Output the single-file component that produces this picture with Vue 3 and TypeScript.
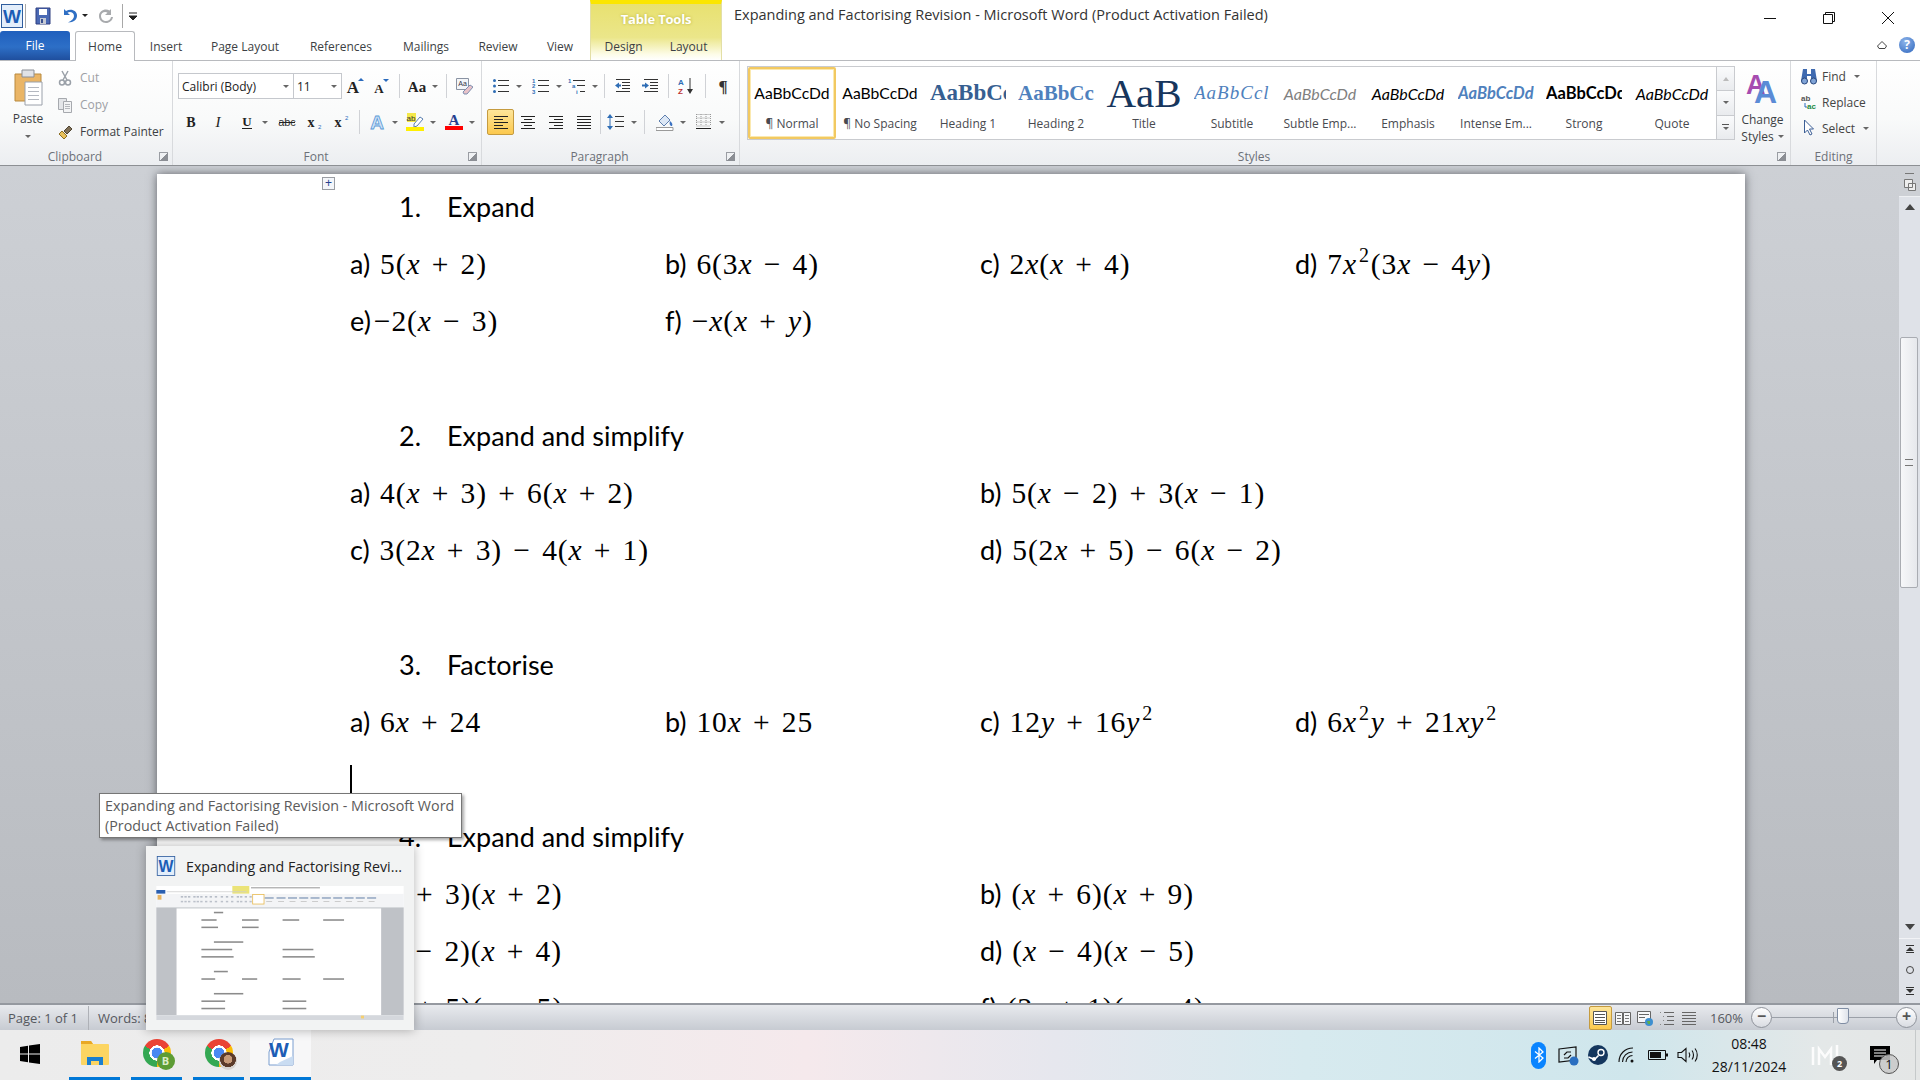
<template>
  <div class="shell">
    <header class="head">
      <div class="head-left">
        <div class="qat">
          <svg class="qat-word" width="22" height="24" viewBox="0 0 22 24" v-html="icons.wordSmall"></svg>
          <i class="qat-sep"></i>
          <svg width="18" height="18" viewBox="0 0 18 18" v-html="icons.save"></svg>
          <svg class="qat-undo" width="18" height="18" viewBox="0 0 18 18" v-html="icons.undo"></svg>
          <span class="caret caret--dark"></span>
          <svg class="qat-redo" width="18" height="18" viewBox="0 0 18 18" v-html="icons.redo"></svg>
          <i class="qat-sep qat-sep--two"></i>
          <svg width="10" height="12" viewBox="0 0 10 12"><path d="M1 3h8M1 6h8l-4 4z" stroke="#222" fill="#222" stroke-width="1" /></svg>
        </div>
        <div class="tabs">
          <div class="tab tab--file">File</div>
          <div
            v-for="t in tabs"
            :key="t.name"
            class="tab"
            :class="{ 'tab--on': t.on }"
            :style="{ width: t.w + 'px' }"
          >
            {{ t.name }}
          </div>
        </div>
      </div>
      <div class="context">
        <div class="context-title">Table Tools</div>
        <div class="context-tabs"><span>Design</span><span>Layout</span></div>
      </div>
      <div class="head-right">
        <div class="title-row">
          <div class="title">Expanding and Factorising Revision  -  Microsoft Word (Product Activation Failed)</div>
          <div class="win-btns">
            <svg width="14" height="14" viewBox="0 0 14 14"><path d="M1 7.500h12" stroke="#111" /></svg>
            <svg width="14" height="14" viewBox="0 0 14 14" fill="none" stroke="#111"><path d="M1.500 3.500h9v9h-9zM3.500 3.500v-2h9v9h-2" /></svg>
            <svg width="14" height="14" viewBox="0 0 14 14"><path d="M1 1l12 12M13 1L1 13" stroke="#111" /></svg>
          </div>
        </div>
        <div class="help-row">
          <svg width="12" height="10" viewBox="0 0 12 10" fill="none" stroke="#444"><path d="M1.500 6L6 1.500 10.500 6 9 8.500H3z" /></svg>
          <div class="help">?</div>
        </div>
      </div>
    </header>

    <section class="ribbon">
      <div class="group group--clip">
        <div class="group-body clip">
          <div class="paste">
            <svg width="32" height="38" viewBox="0 0 32 38" v-html="icons.paste"></svg>
            <span class="paste-label">Paste</span>
            <span class="caret"></span>
          </div>
          <div class="clip-list">
            <div class="clip-row clip-row--off"><svg width="16" height="16" viewBox="0 0 16 16" v-html="icons.cut"></svg>Cut</div>
            <div class="clip-row clip-row--off"><svg width="16" height="16" viewBox="0 0 16 16" v-html="icons.copy"></svg>Copy</div>
            <div class="clip-row"><svg width="16" height="16" viewBox="0 0 16 16" v-html="icons.painter"></svg>Format Painter</div>
          </div>
        </div>
        <div class="group-label">Clipboard<span class="launcher"></span></div>
      </div>

      <div class="group group--font">
        <div class="group-body tool-rows">
          <div class="tool-row">
            <div class="combo combo--font">Calibri (Body)<span class="caret"></span></div>
            <div class="combo combo--size">11<span class="caret"></span></div>
            <template v-for="(b, i) in fontTop" :key="i">
              <i v-if="b.sep" class="tool-sep" :style="{ width: b.w + 'px' }"></i>
              <div v-else class="btn" :style="{ width: b.w + 'px' }">
                <svg width="18" height="18" viewBox="0 0 18 18" v-html="icons[b.i!]"></svg>
                <span v-if="b.c" class="caret"></span>
              </div>
            </template>
          </div>
          <div class="tool-row">
            <template v-for="(b, i) in fontBottom" :key="i">
              <i v-if="b.sep" class="tool-sep" :style="{ width: b.w + 'px' }"></i>
              <div v-else class="btn" :style="{ width: b.w + 'px' }">
                <svg width="18" height="18" viewBox="0 0 18 18" v-html="icons[b.i!]"></svg>
                <span v-if="b.c" class="caret"></span>
              </div>
            </template>
          </div>
        </div>
        <div class="group-label">Font<span class="launcher"></span></div>
      </div>

      <div class="group group--para">
        <div class="group-body tool-rows">
          <div class="tool-row">
            <template v-for="(b, i) in paraTop" :key="i">
              <i v-if="b.sep" class="tool-sep" :style="{ width: b.w + 'px' }"></i>
              <div v-else class="btn" :style="{ width: b.w + 'px' }">
                <svg width="18" height="18" viewBox="0 0 18 18" v-html="icons[b.i!]"></svg>
                <span v-if="b.c" class="caret"></span>
              </div>
            </template>
          </div>
          <div class="tool-row">
            <template v-for="(b, i) in paraBottom" :key="i">
              <i v-if="b.sep" class="tool-sep" :style="{ width: b.w + 'px' }"></i>
              <div v-else class="btn" :class="{ 'btn--on': b.on }" :style="{ width: b.w + 'px' }">
                <svg width="18" height="18" viewBox="0 0 18 18" v-html="icons[b.i!]"></svg>
                <span v-if="b.c" class="caret"></span>
              </div>
            </template>
          </div>
        </div>
        <div class="group-label">Paragraph<span class="launcher"></span></div>
      </div>

      <div class="group group--styles">
        <div class="group-body styles">
          <div class="gallery">
            <div v-for="s in styleItems" :key="s.name" class="style-item" :class="{ 'style-item--on': s.on }">
              <div class="style-preview" :class="s.cls">{{ s.sample }}</div>
              <div class="style-name">{{ s.name }}</div>
            </div>
          </div>
          <div class="gallery-scroll">
            <div class="gs-btn"><span class="caret caret--up caret--pale"></span></div>
            <div class="gs-btn"><span class="caret"></span></div>
            <div class="gs-btn gs-btn--more"><i></i><span class="caret"></span></div>
          </div>
          <div class="change-styles">
            <svg width="36" height="36" viewBox="0 0 36 36">
              <text x="1" y="24" font-family="Liberation Sans, sans-serif" font-size="27" fill="#a64cb0" font-weight="bold">A</text>
              <text x="9" y="33" font-family="Liberation Sans, sans-serif" font-size="32" fill="#5b8bd6" font-weight="bold">A</text>
            </svg>
            <span>Change</span>
            <span class="cs-line">Styles<span class="caret"></span></span>
          </div>
        </div>
        <div class="group-label">Styles<span class="launcher"></span></div>
      </div>

      <div class="group group--edit">
        <div class="group-body edit">
          <div class="edit-row"><svg width="18" height="18" viewBox="0 0 18 18" v-html="icons.find"></svg>Find<span class="caret"></span></div>
          <div class="edit-row"><svg width="18" height="18" viewBox="0 0 18 18" v-html="icons.replace"></svg>Replace</div>
          <div class="edit-row"><svg width="18" height="18" viewBox="0 0 18 18" v-html="icons.select"></svg>Select<span class="caret"></span></div>
        </div>
        <div class="group-label">Editing</div>
      </div>
    </section>

    <main class="doc">
      <div class="canvas">
        <article class="page">
          <span class="move-handle">+</span>
          <template v-for="sec in sections" :key="sec.n">
            <h2 class="q-head"><span class="q-num">{{ sec.n }}</span>{{ sec.title }}</h2>
            <div v-for="(row, r) in sec.rows" :key="r" class="q-row">
              <div v-for="c in row" :key="c.l" class="q-cell" :class="{ 'q-cell--wide': c.wide }">
                {{ c.l }}<span class="math"><template v-for="(t, k) in tokens(c.e)" :key="k"><i v-if="t.k === 'v'">{{ t.s }}</i><sup v-else-if="t.k === 's'">2</sup><template v-else>{{ t.s }}</template></template></span>
              </div>
            </div>
            <div class="q-blank"><span v-if="sec.cursor" class="text-caret"></span></div>
          </template>
        </article>
      </div>
      <aside class="vscroll">
        <div class="vs-top">
          <i class="vs-dash"></i>
          <svg width="14" height="14" viewBox="0 0 14 14" fill="#eee" stroke="#777"><path d="M1.500 1.500h8v8h-8zM5.500 5.500h7v7h-7z" /></svg>
        </div>
        <div class="vs-arrow"><span class="tri tri--up"></span></div>
        <div class="vs-track"><div class="vs-thumb"><i></i></div></div>
        <div class="vs-arrow vs-arrow--down"><span class="tri tri--down"></span></div>
        <div class="vs-browse">
          <svg width="10" height="10" viewBox="0 0 10 10"><path d="M1 1h8v1H1zM5 3l4 4H1zM1 8h8v1H1z" fill="#333" /></svg>
          <svg width="10" height="10" viewBox="0 0 10 10"><circle cx="5" cy="5" r="3.500" fill="none" stroke="#444" /></svg>
          <svg width="10" height="10" viewBox="0 0 10 10"><path d="M1 1h8v1H1zM1 3h8L5 7zM1 8h8v1H1z" fill="#333" /></svg>
        </div>
      </aside>
    </main>

    <footer class="status">
      <div class="status-left">
        <span class="st-page">Page: 1 of 1</span>
        <span class="st-words">Words: 83</span>
      </div>
      <div class="status-right">
        <div class="view-btn view-btn--on"><svg width="18" height="18" viewBox="0 0 18 18" v-html="icons.vPrint"></svg></div>
        <div class="view-btn"><svg width="18" height="18" viewBox="0 0 18 18" v-html="icons.vRead"></svg></div>
        <div class="view-btn"><svg width="18" height="18" viewBox="0 0 18 18" v-html="icons.vWeb"></svg></div>
        <div class="view-btn"><svg width="18" height="18" viewBox="0 0 18 18" v-html="icons.vOutline"></svg></div>
        <div class="view-btn"><svg width="18" height="18" viewBox="0 0 18 18" v-html="icons.vDraft"></svg></div>
        <span class="zoom-val">160%</span>
        <div class="zoom-round">−</div>
        <div class="zoom-track"><i class="zoom-tick"></i><i class="zoom-thumb"></i></div>
        <div class="zoom-round">+</div>
      </div>
    </footer>

    <footer class="taskbar">
      <div class="task-left">
        <div class="start">
          <svg width="20" height="20" viewBox="0 0 20 20" fill="#000"><path d="M0 3l8-1.200v7.700H0zM9 1.600L20 0v9.500H9zM0 10.500h8v7.700L0 17zM9 10.500h11V20L9 18.400z" /></svg>
        </div>
        <div class="task-app">
          <svg width="28" height="24" viewBox="0 0 28 24"><path d="M0 1a1 1 0 011-1h9l2 3h15a1 1 0 011 1v19a1 1 0 01-1 1H1a1 1 0 01-1-1z" fill="#fcd562" /><path d="M0 0h10l2 3H0z" fill="#e9a824" /><path d="M6 24v-8h16v8h-4v-4h-8v4z" fill="#1a7fd0" /></svg>
        </div>
        <div class="task-app">
          <div class="chrome"><span class="chrome-badge">B</span></div>
        </div>
        <div class="task-app task-app--last">
          <div class="chrome"><span class="chrome-photo"></span></div>
        </div>
        <div class="task-app task-app--on">
          <svg width="30" height="30" viewBox="0 0 30 30" v-html="icons.wordBig"></svg>
        </div>
      </div>
      <div class="tray">
        <div class="tray-ico bt">
          <svg width="10" height="16" viewBox="0 0 10 16" fill="none" stroke="#fff" stroke-width="1.300"><path d="M1 4.500l8 6.500-4 4V1l4 4-8 6.500" /></svg>
        </div>
        <div class="tray-ico">
          <svg width="22" height="22" viewBox="0 0 22 22" fill="none" stroke="#111" stroke-width="1.200"><path d="M2 5l17-2v13L2 18zM7 11l3-3h4M14 11l-3 3H7" /><circle cx="17" cy="17" r="4.500" fill="#2a6fc0" stroke="none" /></svg>
        </div>
        <div class="tray-ico">
          <svg width="22" height="22" viewBox="0 0 22 22"><circle cx="11" cy="11" r="10" fill="#14365e" /><circle cx="14" cy="8.500" r="3" fill="none" stroke="#fff" stroke-width="1.400" /><path d="M1.500 13l6 2.500 4-4" stroke="#fff" stroke-width="1.600" fill="none" /><circle cx="7" cy="15" r="2" fill="#fff" /></svg>
        </div>
        <div class="tray-ico">
          <svg width="20" height="18" viewBox="0 0 20 18" fill="none" stroke="#111" stroke-width="1.100"><path d="M1 16C1 8 7 2 15 2M4.500 16c0-5.500 4.500-10 10-10M8 16c0-3.500 3-6.500 6.500-6.500" /><circle cx="14" cy="15" r="1.500" fill="#111" stroke="none" /></svg>
        </div>
        <div class="tray-ico">
          <svg width="20" height="12" viewBox="0 0 20 12"><path d="M.5 1.500h17v9H.5z" fill="none" stroke="#111" /><path d="M2 3h11v6H2zM18 4.500h2v3h-2z" fill="#111" /></svg>
        </div>
        <div class="tray-ico">
          <svg width="22" height="18" viewBox="0 0 22 18" fill="none" stroke="#111" stroke-width="1.100"><path d="M1 6.500h3.500L9 2.500v13l-4.500-4H1zM12 6.500c1 1.500 1 3.500 0 5M15 4.500c2 2.500 2 6.500 0 9M18 2.500c3 3.500 3 9.500 0 13" /></svg>
        </div>
        <div class="clock"><span>08:48</span><span>28/11/2024</span></div>
        <div class="tray-m">
          <svg width="28" height="22" viewBox="0 0 28 22" fill="none" stroke="#fff" stroke-width="2.500" opacity=".9"><path d="M2 21V3M8 21V5l6 8 6-8v16M26 21V1" /></svg>
          <span class="tray-badge">2</span>
        </div>
        <div class="tray-note">
          <svg width="22" height="20" viewBox="0 0 22 20"><path d="M1 1h20v14H8l-3 4v-4H1z" fill="#000" /><path d="M5 5h12M5 8h12M5 11h12" stroke="#fff" /></svg>
          <span class="note-badge">1</span>
        </div>
      </div>
    </footer>

    <div class="tooltip">Expanding and Factorising Revision - Microsoft Word<br />(Product Activation Failed)</div>

    <div class="preview">
      <div class="preview-head">
        <svg width="20" height="20" viewBox="0 0 22 24" v-html="icons.wordSmall"></svg>
        <span>Expanding and Factorising Revi...</span>
      </div>
      <svg class="thumb" width="248" height="134" viewBox="0 0 1920 1040">
        <rect width="1920" height="1040" fill="#fff" />
        <rect x="590" width="132" height="60" fill="#ebe377" />
        <rect x="735" y="10" width="535" height="8" fill="#999" />
        <rect x="0" y="31" width="70" height="29" fill="#2a5fb0" />
        <rect x="80" y="42" width="620" height="6" fill="#ccc" />
        <rect y="61" width="1920" height="105" fill="#f3f4f6" />
        <rect x="10" y="70" width="30" height="36" fill="#e8b460" />
        <rect v-for="x in thumbTools" :key="x" :x="x" y="78" width="18" height="12" fill="#b4bac5" />
        <rect v-for="x in thumbTools" :key="'b' + x" :x="x" y="115" width="18" height="12" fill="#bcc1ca" />
        <rect x="748" y="66" width="88" height="74" fill="#fff" stroke="#e8b84a" stroke-width="6" />
        <rect v-for="x in thumbStyles" :key="'s' + x" :x="x" y="88" width="70" height="10" fill="#8299b8" />
        <rect v-for="x in thumbStyles" :key="'l' + x" :x="x + 12" y="118" width="46" height="6" fill="#c0c0c0" />
        <rect y="166" width="1920" height="837" fill="#bfc2c7" />
        <rect x="157" y="174" width="1588" height="830" fill="#fff" />
        <rect v-for="(m, i) in thumbLines" :key="'m' + i" :x="m.x" :y="m.y" :width="m.w" height="12" fill="#8b8b8b" />
        <rect y="1003" width="1920" height="37" fill="#d5d8dd" />
        <rect x="1588" y="1006" width="24" height="22" fill="#f5cf70" />
      </svg>
    </div>
  </div>
</template>

<script setup lang="ts">
interface Tool {
  i?: string;
  w: number;
  c?: boolean;
  sep?: boolean;
  on?: boolean;
}

const tabs = [
  { name: 'Home', w: 60, on: true },
  { name: 'Insert', w: 62 },
  { name: 'Page Layout', w: 96 },
  { name: 'References', w: 96 },
  { name: 'Mailings', w: 74 },
  { name: 'Review', w: 70 },
  { name: 'View', w: 54 },
];

const fontTop: Tool[] = [
  { i: 'grow', w: 26 },
  { i: 'shrink', w: 26 },
  { sep: true, w: 10 },
  { i: 'textCase', w: 37, c: true },
  { sep: true, w: 10 },
  { i: 'clear', w: 26 },
];

const fontBottom: Tool[] = [
  { i: 'bold', w: 26 },
  { i: 'italic', w: 28 },
  { i: 'under', w: 42, c: true },
  { i: 'strike', w: 26 },
  { i: 'sub', w: 26 },
  { i: 'sup', w: 28 },
  { sep: true, w: 10 },
  { i: 'effect', w: 37, c: true },
  { i: 'highlight', w: 40, c: true },
  { i: 'color', w: 37, c: true },
];

const paraTop: Tool[] = [
  { i: 'bullets', w: 40, c: true },
  { i: 'numbers', w: 40, c: true },
  { i: 'multi', w: 32, c: true },
  { sep: true, w: 10 },
  { i: 'outdent', w: 28 },
  { i: 'indent', w: 27 },
  { sep: true, w: 8 },
  { i: 'sort', w: 28 },
  { sep: true, w: 10 },
  { i: 'pilcrow', w: 26 },
];

const paraBottom: Tool[] = [
  { i: 'alignLeft', w: 27, on: true },
  { i: 'alignCenter', w: 28 },
  { i: 'alignRight', w: 28 },
  { i: 'justify', w: 27 },
  { sep: true, w: 6 },
  { i: 'spacing', w: 38, c: true },
  { sep: true, w: 6 },
  { i: 'shading', w: 47, c: true },
  { i: 'borders', w: 31, c: true },
];

const styleItems = [
  { name: '¶ Normal', sample: 'AaBbCcDd', cls: 'sp-normal', on: true },
  { name: '¶ No Spacing', sample: 'AaBbCcDd', cls: 'sp-normal' },
  { name: 'Heading 1', sample: 'AaBbCc', cls: 'sp-h1' },
  { name: 'Heading 2', sample: 'AaBbCc', cls: 'sp-h2' },
  { name: 'Title', sample: 'AaB', cls: 'sp-title' },
  { name: 'Subtitle', sample: 'AaBbCcl', cls: 'sp-sub' },
  { name: 'Subtle Emp...', sample: 'AaBbCcDd', cls: 'sp-subtle' },
  { name: 'Emphasis', sample: 'AaBbCcDd', cls: 'sp-em' },
  { name: 'Intense Em...', sample: 'AaBbCcDd', cls: 'sp-intense' },
  { name: 'Strong', sample: 'AaBbCcDd', cls: 'sp-strong' },
  { name: 'Quote', sample: 'AaBbCcDd', cls: 'sp-em' },
];

const sections = [
  {
    n: '1.',
    title: 'Expand',
    rows: [
      [
        { l: 'a) ', e: '5(x + 2)' },
        { l: 'b) ', e: '6(3x − 4)' },
        { l: 'c) ', e: '2x(x + 4)' },
        { l: 'd) ', e: '7x^(3x − 4y)' },
      ],
      [
        { l: 'e)', e: '−2(x − 3)' },
        { l: 'f) ', e: '−x(x + y)' },
      ],
    ],
  },
  {
    n: '2.',
    title: 'Expand and simplify',
    rows: [
      [
        { l: 'a) ', e: '4(x + 3) + 6(x + 2)', wide: true },
        { l: 'b) ', e: '5(x − 2) + 3(x − 1)', wide: true },
      ],
      [
        { l: 'c) ', e: '3(2x + 3) − 4(x + 1)', wide: true },
        { l: 'd) ', e: '5(2x + 5) − 6(x − 2)', wide: true },
      ],
    ],
  },
  {
    n: '3.',
    title: 'Factorise',
    cursor: true,
    rows: [
      [
        { l: 'a) ', e: '6x + 24' },
        { l: 'b) ', e: '10x + 25' },
        { l: 'c) ', e: '12y + 16y^' },
        { l: 'd) ', e: '6x^y + 21xy^' },
      ],
    ],
  },
  {
    n: '4.',
    title: 'Expand and simplify',
    rows: [
      [
        { l: 'a) ', e: '(x + 3)(x + 2)', wide: true },
        { l: 'b) ', e: '(x + 6)(x + 9)', wide: true },
      ],
      [
        { l: 'c) ', e: '(x − 2)(x + 4)', wide: true },
        { l: 'd) ', e: '(x − 4)(x − 5)', wide: true },
      ],
      [
        { l: 'e) ', e: '(x + 5)(x − 5)', wide: true },
        { l: 'f) ', e: '(2x + 1)(x − 4)', wide: true },
      ],
    ],
  },
];

function tokens(s: string) {
  const parts = s.match(/[xy]|\^|[^xy^]+/g) || [];
  return parts.map((p) => ({
    s: p,
    k: p === 'x' || p === 'y' ? 'v' : p === '^' ? 's' : 't',
  }));
}

// thumbnail of the window in the taskbar preview, drawn in window coordinates
const thumbTools = [190, 218, 246, 287, 313, 341, 378, 414, 454, 500, 540, 580, 624, 650, 686, 723];
const thumbStyles = [841, 933, 1022, 1109, 1197, 1285, 1373, 1461, 1548, 1636];

const thumbLines = (() => {
  const out: { x: number; y: number; w: number }[] = [];
  let y = 178;
  for (const sec of sections) {
    out.push({ x: 447, y: y + 22, w: sec.title.length * 12 });
    y += 58;
    for (const row of sec.rows) {
      row.forEach((c, i) => {
        const col = row.length === 2 && (c as { wide?: boolean }).wide ? i * 2 : i;
        out.push({ x: 350 + col * 315, y: y + 22, w: c.e.length * 11 + 30 });
      });
      y += 57;
    }
    y += 57;
  }
  return out.filter((l) => l.y < 990);
})();

const sc = 'font-family="Liberation Serif, serif"';
const ss = 'font-family="Liberation Sans, sans-serif"';
const line = (y: number, x1: number, x2: number, c = '#333') =>
  `<path d="M${x1} ${y}.5H${x2}" stroke="${c}"/>`;
const lines = (pairs: number[][], c = '#333') => pairs.map((p) => line(p[0], p[1], p[2], c)).join('');

const icons: Record<string, string> = {
  wordSmall:
    `<rect x=".5" y=".5" width="21" height="23" fill="#e3eefb" stroke="#2f5d9e"/>` +
    `<text x="11" y="19" text-anchor="middle" ${ss} font-weight="bold" font-size="19" fill="#1c5db5">W</text>`,
  wordBig:
    `<path d="M8 1h19v26H3V14z" fill="#fff" stroke="#7a9ed0"/><path d="M14 24l13-6v9H10z" fill="#c9dcf2"/>` +
    `<text x="13" y="19" text-anchor="middle" ${ss} font-weight="bold" font-size="21" fill="#1c5db5">W</text>`,
  save:
    `<path d="M2 1h14v16H2z" fill="#4a69b4" stroke="#2e3f80"/><path d="M5 2h8v6H5z" fill="#fff"/><path d="M6 11h6v6H6z" fill="#c6cad4"/><path d="M7 12h2v4H7z" fill="#39508f"/>`,
  undo:
    `<path d="M4 2v6h6L7.500 5.700C10 4 14 5.500 14 9c0 2.500-2 4.500-6 6.500 6 0 9-3 9-7 0-5-6-7.500-11-4.500z" fill="#2f6fc4"/>`,
  redo:
    `<path d="M14 2v6H8l2.500-2.300C8 4 4 5.500 4 9c0 3 2.500 5 5 5 2.500 0 4.500-1.500 5-4h2c-.5 3.500-3.500 6-7 6-4 0-7-3-7-7 0-5.500 6.500-8 10.500-5.500z" fill="#a8aaad"/>`,
  paste:
    `<path d="M3 6h26v27H3z" fill="#eab566" stroke="#b98a3f"/><path d="M10 2h12v7H10z" fill="#e0e2e6" stroke="#8b8f96"/>` +
    `<path d="M13 14h17v23H13z" fill="#fff" stroke="#9aa0aa"/>` +
    lines([[19, 16, 27], [23, 16, 27], [27, 16, 27], [31, 16, 27]], '#b4b8c0'),
  cut:
    `<path d="M5 1l5 9M11 1L6 10" stroke="#9aa0a8" stroke-width="1.500"/><circle cx="5" cy="12.500" r="2.500" fill="none" stroke="#9aa0a8" stroke-width="1.500"/><circle cx="11" cy="12.500" r="2.500" fill="none" stroke="#9aa0a8" stroke-width="1.500"/>`,
  copy:
    `<path d="M1.500 1.500h8v11h-8z" fill="#e4e6e9" stroke="#a6a9ae"/><path d="M6.500 4.500h8v11h-8z" fill="#f3f4f5" stroke="#a6a9ae"/>` +
    lines([[7, 8, 13], [9, 8, 13], [11, 8, 13]], '#b5b8bd'),
  painter:
    `<path d="M2 10l5 5 3-3-5-5z" fill="#e9c15a" stroke="#8c6e25"/><path d="M7 7l5-5 3 3-5 5z" fill="#7f6f55" stroke="#4f4532"/>`,
  grow:
    `<text x="7" y="16" text-anchor="middle" ${sc} font-weight="bold" font-size="17" fill="#222">A</text><path d="M12 4l3-3 3 3z" fill="#2a6bbd"/>`,
  shrink:
    `<text x="7" y="16" text-anchor="middle" ${sc} font-weight="bold" font-size="13" fill="#222">A</text><path d="M11 2h6l-3 3z" fill="#2a6bbd"/>`,
  textCase: `<text x="9" y="15" text-anchor="middle" ${sc} font-weight="bold" font-size="15" fill="#222">Aa</text>`,
  clear:
    `<path d="M1.500 1.500h12v11h-12z" fill="#f4f6f9" stroke="#8a93a3"/><text x="7.500" y="9" text-anchor="middle" ${ss} font-size="7" fill="#334">Aa</text><path d="M8 15l7-7 3 2-6 7H9z" fill="#e9c3c9" stroke="#7e8fb0"/>`,
  bold: `<text x="9" y="14" text-anchor="middle" ${sc} font-weight="bold" font-size="14" fill="#222">B</text>`,
  italic: `<text x="9" y="14" text-anchor="middle" ${sc} font-style="italic" font-size="15" fill="#222">I</text>`,
  under:
    `<text x="9" y="13" text-anchor="middle" ${sc} font-weight="bold" font-size="13" fill="#222">U</text><path d="M4 15.500h10" stroke="#222"/>`,
  strike:
    `<text x="9" y="13" text-anchor="middle" ${ss} font-size="11" fill="#333">abc</text><path d="M1 9.500h16" stroke="#222"/>`,
  sub:
    `<text x="7" y="14" text-anchor="middle" ${sc} font-weight="bold" font-size="14" fill="#222">x</text><text x="14" y="16" ${ss} font-size="6" fill="#2a6bbd">2</text>`,
  sup:
    `<text x="7" y="14" text-anchor="middle" ${sc} font-weight="bold" font-size="14" fill="#222">x</text><text x="14" y="7" ${ss} font-size="6" fill="#2a6bbd">2</text>`,
  effect:
    `<text x="9" y="16" text-anchor="middle" ${ss} font-weight="bold" font-size="19" fill="#cfe2f8" stroke="#5b9ad6" stroke-width=".8">A</text>`,
  highlight:
    `<rect x="1" y="0" width="9" height="9" fill="#f4e84a"/><text x="5" y="8" text-anchor="middle" ${ss} font-size="8" fill="#333">ab</text><path d="M8 11l6-7 3 2-6 7-3 1z" fill="#fff" stroke="#5a7fb0"/><path d="M0 14h18v4H0z" fill="#ffef00"/>`,
  color:
    `<text x="9" y="12" text-anchor="middle" ${sc} font-weight="bold" font-size="15" fill="#25408f">A</text><path d="M0 13h18v4H0z" fill="#f00"/>`,
  bullets:
    `<circle cx="2.500" cy="3.500" r="1.500" fill="#2e6db5"/><circle cx="2.500" cy="9" r="1.500" fill="#2e6db5"/><circle cx="2.500" cy="14.500" r="1.500" fill="#2e6db5"/>` +
    lines([[3, 6, 17], [8, 6, 17], [14, 6, 17]]),
  numbers:
    `<text x="0" y="6" ${ss} font-size="6" font-weight="bold" fill="#2e6db5">1</text><text x="0" y="11" ${ss} font-size="6" font-weight="bold" fill="#2e6db5">2</text><text x="0" y="17" ${ss} font-size="6" font-weight="bold" fill="#2e6db5">3</text>` +
    lines([[3, 6, 17], [8, 6, 17], [14, 6, 17]]),
  multi:
    `<text x="0" y="6" ${ss} font-size="6" font-weight="bold" fill="#2e6db5">1</text><text x="4" y="11" ${ss} font-size="6" font-weight="bold" fill="#2e6db5">a</text><text x="8" y="17" ${ss} font-size="6" font-weight="bold" fill="#2e6db5">i</text>` +
    lines([[3, 5, 17], [8, 9, 17], [14, 12, 17]]),
  outdent:
    lines([[2, 2, 16], [5, 8, 16], [8, 8, 16], [11, 8, 16], [14, 2, 16]]) + `<path d="M1 8.500l4-3v6z" fill="#2e6db5"/><path d="M4 7.500h3v2H4z" fill="#2e6db5"/>`,
  indent:
    lines([[2, 2, 16], [5, 8, 16], [8, 8, 16], [11, 8, 16], [14, 2, 16]]) + `<path d="M7 8.500l-4-3v6z" fill="#2e6db5"/><path d="M0 7.500h3v2H0z" fill="#2e6db5"/>`,
  sort:
    `<text x="1" y="8" ${ss} font-size="8" font-weight="bold" fill="#2e6db5">A</text><text x="1" y="17" ${ss} font-size="8" font-weight="bold" fill="#b33">Z</text><path d="M13 1v14" stroke="#333"/><path d="M10 12l3 5 3-5z" fill="#333"/>`,
  pilcrow: `<text x="9" y="15" text-anchor="middle" ${sc} font-weight="bold" font-size="17" fill="#333">¶</text>`,
  alignLeft: lines([[3, 2, 16], [6, 2, 11], [9, 2, 16], [12, 2, 11], [15, 2, 16]], '#222'),
  alignCenter: lines([[3, 2, 16], [6, 5, 13], [9, 2, 16], [12, 5, 13], [15, 2, 16]], '#222'),
  alignRight: lines([[3, 2, 16], [6, 7, 16], [9, 2, 16], [12, 7, 16], [15, 2, 16]], '#222'),
  justify: lines([[3, 2, 16], [6, 2, 16], [9, 2, 16], [12, 2, 16], [15, 2, 16]], '#222'),
  spacing:
    `<path d="M3 1l3 4H0zM3 17l3-4H0z" fill="#2e6db5"/><path d="M3 4v10" stroke="#2e6db5"/>` + lines([[3, 8, 17], [8, 8, 17], [13, 8, 17]]),
  shading:
    `<path d="M3 8l6-6 5 5-6 6z" fill="#dce7f5" stroke="#5f7fae"/><path d="M14 8c2 2 3 3 2 5-2 0-3-2-2-5z" fill="#3b72c2"/><path d="M0 14.500h17v3H0z" fill="#fff" stroke="#9a9a9a"/>`,
  borders:
    `<path d="M1.500 1.500h14M1.500 5h14M1.500 9h14M1.500 13h14M1.500 1v12M6 1v12M11 1v12M15.500 1v12" stroke="#999" stroke-dasharray="1 1"/><path d="M1 15.500h15" stroke="#222"/>`,
  find:
    `<path d="M3 2h4v5h4V2h4l2 12h-6V9H7v5H1z" fill="#3f6ab0"/><circle cx="4.500" cy="14" r="3" fill="#7fa3d6" stroke="#27467c"/><circle cx="13.500" cy="14" r="3" fill="#7fa3d6" stroke="#27467c"/>`,
  replace:
    `<text x="1" y="8" ${ss} font-size="8" font-weight="bold" fill="#555">ab</text><text x="7" y="16" ${ss} font-size="8" font-weight="bold" fill="#1c8a3f">ac</text><path d="M5 10v4h2" stroke="#2a6bbd" fill="none"/>`,
  select: `<path d="M4.500 1v13l3-3 2.500 5 2-1-2.500-5h4z" fill="#fff" stroke="#3c5f96"/>`,
  vPrint: `<path d="M2.500 2.500h13v13h-13z" fill="#fff" stroke="#555"/>` + lines([[5, 4, 14], [8, 4, 14], [11, 4, 14], [13, 4, 14]], '#555'),
  vRead: `<path d="M1.500 3.500h7v12h-7zM9.500 3.500h7v12h-7z" fill="#f6f7f9" stroke="#666"/>` + lines([[6, 3, 7], [9, 3, 7], [12, 3, 7], [6, 11, 15], [9, 11, 15], [12, 11, 15]], '#777'),
  vWeb: `<path d="M1.500 2.500h13v11h-13z" fill="#f6f7f9" stroke="#666"/>` + lines([[5, 3, 13], [8, 3, 9]], '#666') + `<circle cx="13" cy="13" r="4" fill="#3d8fd0"/><path d="M11 12h3v3h-2z" fill="#5cb04a"/>`,
  vOutline: lines([[3, 6, 16], [7, 9, 16], [11, 9, 16], [15, 6, 16]], '#666') + `<path d="M2 3.500h2M5 7.500h2M5 11.500h2M2 15.500h2" stroke="#888" stroke-dasharray="1 1"/>`,
  vDraft: lines([[3, 2, 16], [6, 2, 16], [9, 2, 16], [12, 2, 16], [15, 2, 16]], '#666'),
};
</script>

<style scoped>
.shell {
  position: relative;
  width: 1920px;
  height: 1080px;
  display: flex;
  flex-direction: column;
  overflow: hidden;
  background: #fff;
  font-family: "Open Sans", "Noto Sans", sans-serif;
  font-size: 12px;
  color: #3c3f44;
}

/* title bar + tabs */
.head {
  height: 61px;
  display: flex;
  border-bottom: 1px solid #b8babe;
  box-sizing: border-box;
  flex: none;
}
.head-left {
  width: 590px;
  flex: none;
}
.qat {
  height: 31px;
  display: flex;
  align-items: center;
  padding-left: 1px;
  box-sizing: border-box;
}
.qat svg {
  flex: none;
}
.qat-sep {
  width: 1px;
  height: 24px;
  background: #a8a8a8;
  margin: 0 8px 0 2px;
}
.qat-sep--two {
  margin: 0 5px 0 7px;
}
.qat-undo {
  margin: 0 4px 0 8px;
}
.qat-redo {
  margin-left: 9px;
}
.tabs {
  display: flex;
  height: 30px;
  align-items: flex-start;
}
.tab {
  height: 30px;
  display: flex;
  align-items: center;
  justify-content: center;
  box-sizing: border-box;
  flex: none;
  font-size: 12px;
}
.tab--file {
  width: 70px;
  height: 29px;
  margin-right: 5px;
  background: linear-gradient(#1f5fbd, #2d6fc7 55%, #1f4f9e);
  border-radius: 3px 3px 0 0;
  color: #fff;
}
.tab--on {
  background: #fff;
  border: 1px solid #b8babe;
  border-bottom: none;
  border-radius: 3px 3px 0 0;
  height: 30px;
  position: relative;
  z-index: 2;
}
.context {
  width: 132px;
  flex: none;
  background: linear-gradient(#e8e170 0, #ebe68a 60%, #fdfce8 90%, #fff 100%);
  border-top: 4px solid #fbe600;
  box-sizing: border-box;
  height: 60px;
  border-left: 1px solid #e3dfa6;
  border-right: 1px solid #e3dfa6;
}
.context-title {
  height: 29px;
  display: flex;
  align-items: center;
  justify-content: center;
  color: #fff;
  font-size: 13px;
  font-weight: 700;
  text-shadow: 0 0 3px #b5ae3a;
  letter-spacing: -0.2px;
}
.context-tabs {
  display: flex;
  height: 27px;
  align-items: center;
  justify-content: space-around;
}
.head-right {
  flex: 1;
  display: flex;
  flex-direction: column;
}
.title-row {
  height: 31px;
  display: flex;
  justify-content: space-between;
}
.title {
  padding: 5px 0 0 12px;
  font-size: 14.5px;
  color: #333;
  white-space: pre;
}
.win-btns {
  display: flex;
  gap: 45px;
  padding: 11px 25px 0 0;
}
.help-row {
  display: flex;
  justify-content: flex-end;
  align-items: center;
  gap: 11px;
  padding: 0 5px 2px 0;
  height: 29px;
  box-sizing: border-box;
}
.help {
  width: 16px;
  height: 16px;
  border-radius: 50%;
  background: radial-gradient(circle at 40% 30%, #8db4ea, #2f66bd);
  color: #fff;
  font-weight: 700;
  font-size: 12px;
  line-height: 16px;
  text-align: center;
}

/* ribbon */
.ribbon {
  height: 105px;
  flex: none;
  display: flex;
  box-sizing: border-box;
  background: linear-gradient(#fff 0, #f9fafa 55%, #eceef1 100%);
  border-bottom: 1px solid #8d9094;
  z-index: 1;
}
.group {
  position: relative;
  display: flex;
  flex-direction: column;
  box-sizing: border-box;
  border-right: 1px solid #d8dadd;
  flex: none;
}
.group--clip { width: 173px; }
.group--font { width: 309px; }
.group--para { width: 258px; }
.group--styles { width: 1051px; }
.group--edit { width: 86px; }
.group-body {
  flex: 1;
  min-height: 0;
}
.group-label {
  height: 20px;
  line-height: 23px;
  text-align: center;
  color: #6c7078;
  flex: none;
  padding-right: 22px;
}
.group--edit .group-label {
  padding-right: 0;
}
.launcher {
  position: absolute;
  right: 4px;
  bottom: 4px;
  width: 8px;
  height: 8px;
  border: 1px solid #9a9da3;
  border-width: 1px 0 0 1px;
  background: linear-gradient(135deg, transparent 50%, #8b8e94 50%);
}
.caret {
  display: inline-block;
  width: 0;
  height: 0;
  border-left: 3.5px solid transparent;
  border-right: 3.5px solid transparent;
  border-top: 3.5px solid #666;
  flex: none;
}
.caret--dark { border-top-color: #222; }
.caret--up {
  border-top: none;
  border-bottom: 4px solid #666;
}
.caret--pale { border-bottom-color: #bbb; }

.clip {
  display: flex;
  padding-top: 3px;
}
.paste {
  width: 56px;
  flex: none;
  display: flex;
  flex-direction: column;
  align-items: center;
  padding-top: 4px;
}
.paste-label {
  margin: 5px 0 8px;
  line-height: 16px;
}
.clip-list {
  display: flex;
  flex-direction: column;
  padding-left: 1px;
}
.clip-row {
  height: 27px;
  display: flex;
  align-items: center;
  gap: 7px;
  white-space: nowrap;
}
.clip-row--off {
  color: #9da0a5;
}

.tool-rows {
  display: flex;
  flex-direction: column;
  gap: 10px;
  padding: 12px 0 0 5px;
}
.tool-row {
  display: flex;
  height: 26px;
  align-items: center;
}
.combo {
  height: 26px;
  box-sizing: border-box;
  border: 1px solid #c5c8cd;
  background: #fff;
  display: flex;
  align-items: center;
  justify-content: space-between;
  padding: 0 4px 0 3px;
  flex: none;
  color: #222;
}
.combo--font { width: 115px; border-right: none; }
.combo--size { width: 49px; }
.btn {
  height: 26px;
  display: flex;
  align-items: center;
  justify-content: center;
  gap: 6px;
  flex: none;
  box-sizing: border-box;
}
.btn--on {
  background: linear-gradient(#fde59a, #fcc94e);
  border: 1px solid #c59b3f;
  border-radius: 2px;
}
.tool-sep {
  height: 24px;
  flex: none;
  background: linear-gradient(#d0d2d6, #d0d2d6) center / 1px 100% no-repeat;
}

.styles {
  display: flex;
  padding: 5px 0 0 7px;
  align-items: flex-start;
}
.gallery {
  display: flex;
  width: 970px;
  height: 74px;
  box-sizing: border-box;
  border: 1px solid #c9cbcf;
  background: #fff;
  flex: none;
}
.style-item {
  width: 88px;
  flex: none;
  display: flex;
  flex-direction: column;
  align-items: center;
  box-sizing: border-box;
  padding-top: 5px;
}
.style-item--on {
  border: 2px solid #f2c961;
  border-radius: 2px;
  box-shadow: inset 0 0 0 1px #fbe9b0;
  padding-top: 3px;
}
.style-preview {
  width: 76px;
  height: 42px;
  display: flex;
  align-items: center;
  justify-content: center;
  overflow: hidden;
  white-space: nowrap;
  color: #000;
  font-family: Lato, sans-serif;
  font-size: 15.7px;
}
.style-name {
  margin-top: 1px;
  line-height: 18px;
  color: #484a4f;
  white-space: nowrap;
}
.sp-h1 {
  font-family: "Liberation Serif", serif;
  font-weight: 700;
  font-size: 23px;
  color: #365f91;
  justify-content: flex-start;
}
.sp-h2 {
  font-family: "Liberation Serif", serif;
  font-weight: 700;
  font-size: 21px;
  color: #4f81bd;
  justify-content: flex-start;
}
.sp-title {
  font-family: "Liberation Serif", serif;
  font-size: 41px;
  color: #17365d;
}
.sp-sub {
  font-family: "Liberation Serif", serif;
  font-style: italic;
  font-size: 19px;
  letter-spacing: 1px;
  color: #4f81bd;
  justify-content: flex-start;
}
.sp-subtle { font-style: italic; color: #808080; font-size: 16px; }
.sp-em { font-style: italic; font-size: 16px; }
.sp-intense { font-style: italic; font-weight: 700; font-size: 16.5px; color: #4f81bd; justify-content: flex-start; }
.sp-strong { font-weight: 700; font-size: 16.5px; justify-content: flex-start; }

.gallery-scroll {
  width: 18px;
  height: 74px;
  display: flex;
  flex-direction: column;
  flex: none;
  box-sizing: border-box;
}
.gs-btn {
  flex: 1;
  display: flex;
  flex-direction: column;
  gap: 2px;
  align-items: center;
  justify-content: center;
  background: linear-gradient(#fafbfc, #e9ebee);
  border: 1px solid #c9cbcf;
  border-left: none;
  margin-top: -1px;
}
.gs-btn:first-child { margin-top: 0; }
.gs-btn--more i {
  width: 7px;
  height: 1px;
  background: #555;
}
.change-styles {
  width: 55px;
  flex: none;
  display: flex;
  flex-direction: column;
  align-items: center;
  line-height: 17px;
  padding-top: 4px;
}
.change-styles svg {
  margin-bottom: 5px;
}
.cs-line {
  display: flex;
  align-items: center;
  gap: 4px;
}

.edit {
  padding: 2px 0 0 9px;
  color: #444;
}
.edit-row {
  height: 26px;
  display: flex;
  align-items: center;
  gap: 4px;
}
.edit-row .caret {
  margin-left: 4px;
}

/* document area */
.doc {
  flex: none;
  height: 837px;
  display: flex;
}
.canvas {
  flex: 1;
  min-width: 0;
  overflow: hidden;
  padding: 8px 0 0 157px;
  box-sizing: border-box;
  background: linear-gradient(#cdd0d5, #b8bbc0);
}
.page {
  position: relative;
  width: 1588px;
  min-height: 1200px;
  background: #fff;
  box-shadow: 0 0 9px rgba(60, 63, 70, 0.75);
  padding: 4px 0 0 193px;
  box-sizing: border-box;
  font-family: Lato, sans-serif;
  font-size: 27px;
  color: #000;
}
.move-handle {
  position: absolute;
  left: 165px;
  top: 3px;
  width: 11px;
  height: 11px;
  border: 1px solid #9a9da3;
  background: #f4f6fa;
  color: #25408f;
  font-size: 12px;
  line-height: 10px;
  text-align: center;
  font-family: "Liberation Sans", sans-serif;
}
.q-head {
  margin: 0 0 0 49px;
  height: 58px;
  line-height: 58px;
  font-weight: 400;
  font-size: 27px;
}
.q-num {
  display: inline-block;
  width: 48px;
}
.q-row {
  display: grid;
  grid-template-columns: repeat(4, 315px);
  height: 57px;
  line-height: 55px;
}
.q-cell {
  white-space: pre;
}
.q-cell--wide {
  grid-column: span 2;
}
.math {
  font-family: "Liberation Serif", serif;
  font-size: 29.5px;
  letter-spacing: 0.9px;
  word-spacing: 3px;
  margin-left: 3px;
}
.math sup {
  font-size: 20px;
  line-height: 0;
  vertical-align: 12px;
  margin: 0 1px 0 2px;
}
.q-blank {
  height: 57px;
  display: flex;
  align-items: center;
}
.text-caret {
  width: 2px;
  height: 30px;
  background: #000;
}

.vscroll {
  width: 21px;
  flex: none;
  display: flex;
  flex-direction: column;
  background: #dfe2e8;
  box-sizing: border-box;
}
.vs-top {
  height: 31px;
  background: #cdd0d5;
  display: flex;
  flex-direction: column;
  align-items: center;
  padding-top: 7px;
  gap: 4px;
  box-sizing: border-box;
  border-bottom: 1px solid #eef0f3;
  flex: none;
}
.vs-dash {
  width: 9px;
  height: 1px;
  background: #777;
}
.vs-arrow {
  height: 20px;
  display: flex;
  align-items: center;
  justify-content: center;
  flex: none;
}
.vs-arrow--down {
  height: 22px;
  border-bottom: 1px solid #f2f3f6;
}
.tri {
  width: 0;
  height: 0;
  border-left: 5px solid transparent;
  border-right: 5px solid transparent;
}
.tri--up { border-bottom: 6px solid #444; }
.tri--down { border-top: 6px solid #444; }
.vs-track {
  flex: 1;
  padding-top: 120px;
  box-sizing: border-box;
}
.vs-thumb {
  width: 18px;
  height: 251px;
  box-sizing: border-box;
  margin-left: 1px;
  background: linear-gradient(90deg, #f6f7f9, #e6e8ec);
  border: 1px solid #a9acb2;
  border-radius: 2px;
  display: flex;
  align-items: center;
  justify-content: center;
}
.vs-thumb i {
  width: 8px;
  height: 5px;
  border-top: 1px solid #777;
  border-bottom: 1px solid #777;
}
.vs-browse {
  height: 64px;
  flex: none;
  display: flex;
  flex-direction: column;
  align-items: center;
  justify-content: space-around;
  padding-bottom: 2px;
  box-sizing: border-box;
}

/* status bar */
.status {
  height: 27px;
  flex: none;
  display: flex;
  justify-content: space-between;
  box-sizing: border-box;
  border-top: 2px solid #9599a0;
  background: linear-gradient(#e8eaee, #c7cbd2);
  color: #55585e;
  font-size: 13px;
}
.status-left {
  display: flex;
  align-items: center;
  padding-left: 8px;
}
.st-page {
  padding-right: 10px;
  border-right: 1px solid #aeb1b7;
  margin-right: 9px;
  line-height: 24px;
}
.status-right {
  display: flex;
  align-items: center;
  padding-right: 3px;
}
.view-btn {
  width: 22px;
  height: 24px;
  display: flex;
  align-items: center;
  justify-content: center;
  box-sizing: border-box;
  flex: none;
}
.view-btn--on {
  background: linear-gradient(#fde59a, #fcc94e);
  border: 1px solid #c59b3f;
  border-radius: 2px;
  width: 23px;
}
.zoom-val {
  margin: 0 8px 0 10px;
}
.zoom-round {
  width: 19px;
  height: 19px;
  border-radius: 50%;
  background: linear-gradient(#fff, #d9dce2);
  border: 1px solid #8f939b;
  color: #555;
  font-size: 16px;
  font-weight: 700;
  line-height: 17px;
  text-align: center;
  flex: none;
}
.zoom-track {
  position: relative;
  width: 124px;
  height: 1px;
  background: #9ba0a8;
}
.zoom-tick {
  position: absolute;
  left: 61px;
  top: -5px;
  width: 1px;
  height: 11px;
  background: #9ba0a8;
}
.zoom-thumb {
  position: absolute;
  left: 65px;
  top: -9px;
  width: 10px;
  height: 14px;
  background: linear-gradient(90deg, #fff, #dfe3ea);
  border: 1px solid #7f8da3;
  border-radius: 1px 1px 4px 4px;
}

/* windows taskbar */
.taskbar {
  height: 50px;
  flex: none;
  display: flex;
  justify-content: space-between;
  background: linear-gradient(90deg, #ececec 0, #eeeded 25%, #f5e9ec 42%, #e6e7ee 55%, #d7eaef 68%, #cfe6ec 85%, #e4e8e8 95%, #e4e6e6 100%);
}
.task-left {
  display: flex;
  width: 311px;
}
.start {
  width: 69px;
  flex: none;
  display: flex;
  align-items: center;
  justify-content: center;
  padding: 0 9px 3px 0;
  box-sizing: border-box;
}
.task-app {
  width: 51px;
  flex: none;
  margin-right: 11px;
  display: flex;
  align-items: center;
  justify-content: center;
  box-sizing: border-box;
  border-bottom: 3px solid #0078d7;
  padding-bottom: 2px;
}
.task-app--last {
  margin-right: 6px;
}
.task-app--on {
  width: 61px;
  margin: 0;
  background: #f7f7f8;
}
.chrome {
  position: relative;
  width: 28px;
  height: 28px;
  border-radius: 50%;
  background:
    radial-gradient(circle, #4a89f3 0 27%, #fff 28% 38%, transparent 39%),
    conic-gradient(#ea4335 0 60deg, #fbbc05 60deg 180deg, #34a853 180deg 300deg, #ea4335 300deg);
}
.chrome-badge {
  position: absolute;
  right: -4px;
  bottom: -3px;
  width: 18px;
  height: 18px;
  border-radius: 50%;
  background: #5d9c35;
  color: #dcecc8;
  font-size: 11px;
  font-weight: 700;
  line-height: 18px;
  text-align: center;
}
.chrome-photo {
  position: absolute;
  right: -4px;
  bottom: -3px;
  width: 18px;
  height: 18px;
  border-radius: 50%;
  background: radial-gradient(circle at 50% 40%, #c79a78 0 30%, #5c3b2a 32% 55%, #d7d3cf 58%);
}
.tray {
  display: flex;
  align-items: center;
  border-right: 1px solid #c5c9ca;
  margin-right: 4px;
}
.tray-ico {
  width: 30px;
  display: flex;
  justify-content: center;
  align-items: center;
  flex: none;
}
.bt {
  width: 15px;
  height: 27px;
  margin: 0 7px;
  border-radius: 8px;
  background: #0a84ff;
}
.clock {
  width: 92px;
  flex: none;
  display: flex;
  flex-direction: column;
  align-items: center;
  gap: 5px;
  font-size: 14px;
  line-height: 18px;
  color: #111;
}
.tray-m {
  position: relative;
  width: 60px;
  flex: none;
  display: flex;
  justify-content: center;
}
.tray-badge {
  position: absolute;
  right: 8px;
  top: 12px;
  width: 15px;
  height: 15px;
  border-radius: 50%;
  background: #555;
  color: #fff;
  font-size: 9px;
  line-height: 15px;
  text-align: center;
  font-weight: 700;
}
.tray-note {
  position: relative;
  width: 60px;
  flex: none;
  padding-left: 14px;
  box-sizing: border-box;
  display: flex;
}
.note-badge {
  position: absolute;
  left: 24px;
  top: 9px;
  width: 20px;
  height: 20px;
  border-radius: 50%;
  background: rgba(200, 200, 200, 0.85);
  border: 1px solid #555;
  box-sizing: border-box;
  text-align: center;
  line-height: 18px;
  font-size: 13px;
  color: #111;
}

/* taskbar hover overlays */
.tooltip {
  position: absolute;
  left: 99px;
  top: 793px;
  width: 363px;
  height: 45px;
  box-sizing: border-box;
  background: #fff;
  border: 1px solid #767676;
  box-shadow: 2px 2px 3px rgba(0, 0, 0, 0.35);
  padding: 2px 5px;
  font-size: 14.3px;
  line-height: 20px;
  color: #5b5b5b;
  white-space: nowrap;
  z-index: 5;
}
.preview {
  position: absolute;
  left: 146px;
  top: 846px;
  width: 268px;
  height: 184px;
  background: #f2f3f3;
  box-shadow: 0 0 10px rgba(0, 0, 0, 0.3);
  padding: 9px 10px 0;
  box-sizing: border-box;
  z-index: 4;
}
.preview-head {
  display: flex;
  align-items: center;
  gap: 10px;
  height: 22px;
  margin-bottom: 9px;
  font-size: 14.2px;
  color: #222;
  white-space: nowrap;
}
.thumb {
  display: block;
}
</style>

<style>
html,
body {
  margin: 0;
  overflow: hidden;
}
</style>
